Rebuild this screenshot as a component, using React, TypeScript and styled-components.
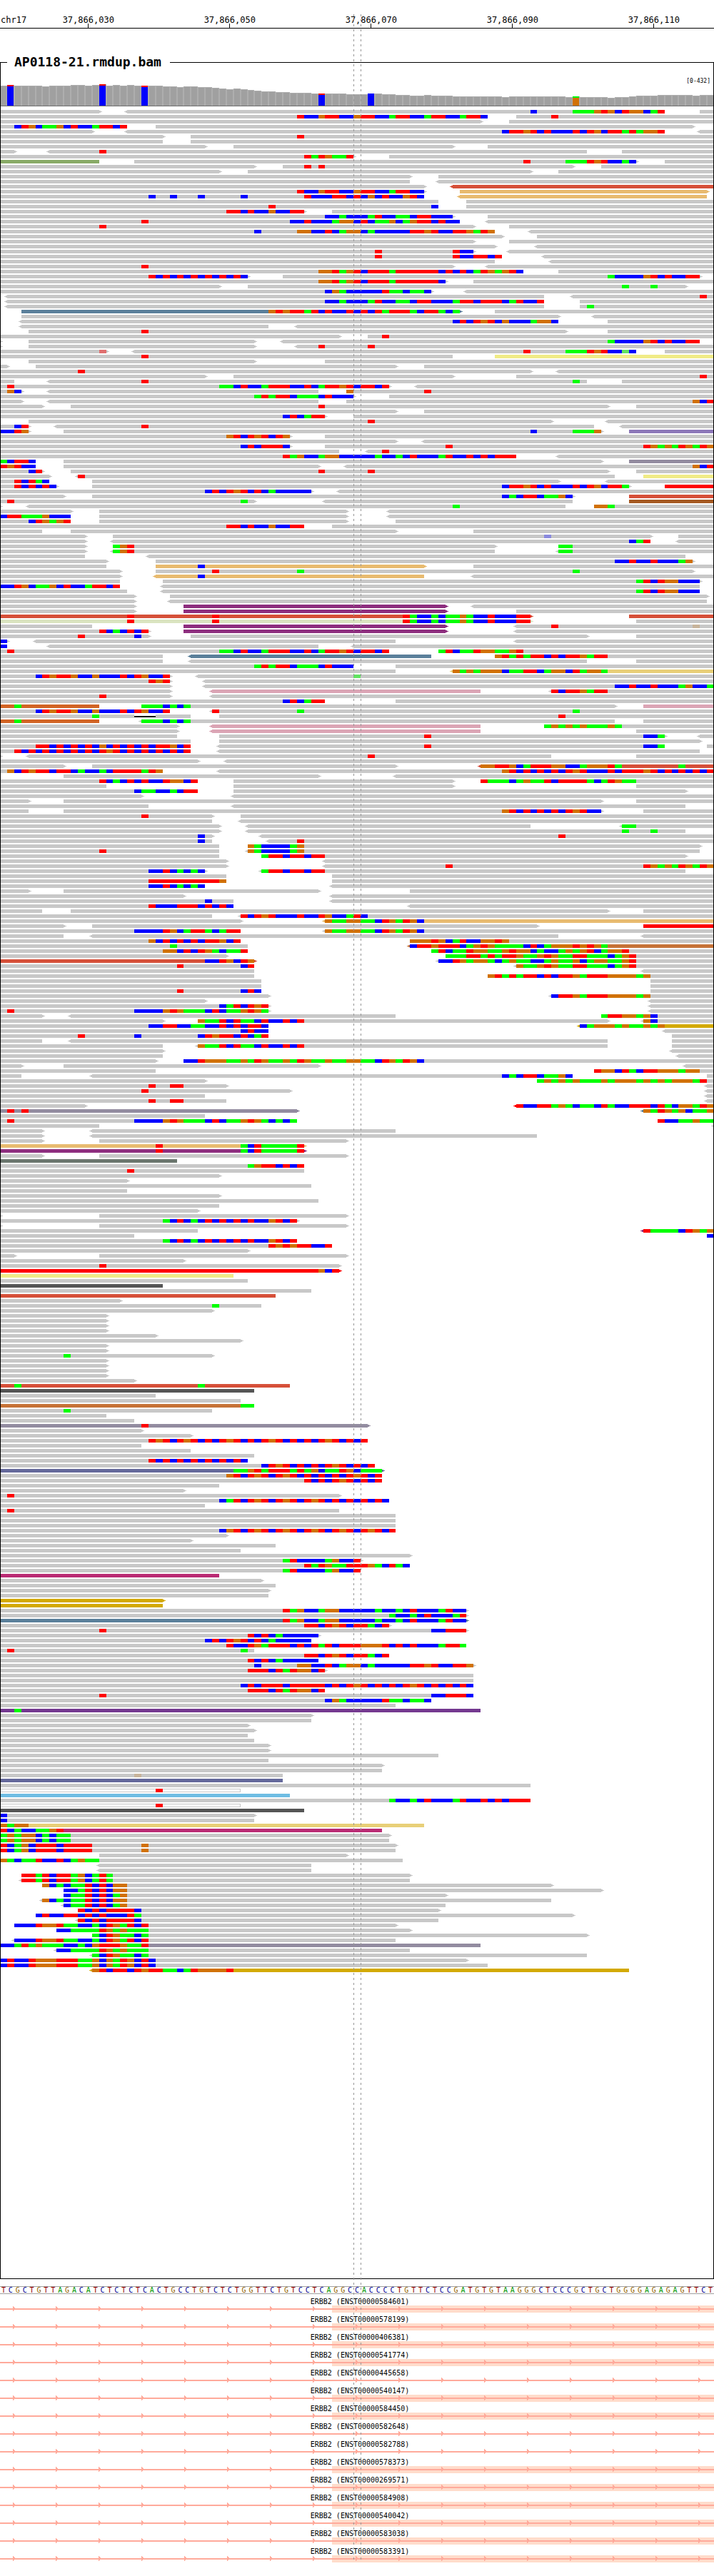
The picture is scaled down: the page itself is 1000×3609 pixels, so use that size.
import React from "react";
import styled, { createGlobalStyle } from "styled-components";

const BASES = 101;
const WIDTH = 1000;
const ROW_PITCH = 7;
const READ_HEIGHT = 5;
const COVERAGE_HEIGHT = 30;

/* x position of the left edge of a base */
const edge = (base: number) => Math.round((base * WIDTH) / BASES);

const baseColor: Record<string, string> = {
  A: "#00ff00",
  C: "#0000ff",
  G: "#d17105",
  T: "#ff0000",
  a: "#62e362",
  c: "#8a8ade",
  g: "#c8b49b",
  t: "#e07070",
};

const letterColor: Record<string, string> = {
  A: "#009600",
  C: "#000096",
  G: "#966400",
  T: "#960000",
};

const readColor: Record<string, string> = {
  g: "#89ab67",
  r: "#d65039",
  o: "#e8bb70",
  b: "#5b809b",
  y: "#f0eb87",
  p: "#8d78b9",
  v: "#938ca0",
  R: "#ff0000",
  n: "#a55a23",
  m: "#8e2f7f",
  l: "#dae4c0",
  Y: "#e8cf78",
  k: "#dba5b5",
  c: "#d26425",
  s: "#c67237",
  d: "#d3a900",
  t: "#6b766e",
  K: "#555555",
  i: "#65699b",
  M: "#ba2b74",
  u: "#743990",
  q: "#6fbde3",
};

/*
 * One line per packed row. "a-b" is a read from base a to base b, with "<" or
 * ">" for its strand arrow and ":x" for its colour; "@nACGT" are bases that
 * differ from the reference, starting at n; "~a-b" is a deletion.
 */
const ROWS = `
0-14> <18-94 99-101 @75C @81AAAGTGCTGGCAT
0-69 73-101 @42TCCGTTCCGTTCCATTCCATTCCATTC @78T
0-68> 72-101
0-18 22-98> @2CTGCAAGCTCCATTCT
0-13> <18-94 <99-101 @71CTTGTCTCCCTCTGCTTATAGGT
0-23> 27-101 @42T
0-23 27-101
0-29> 33-64> 69-101
0-2> <7-83 88-101 @14T
0-50> 55-101 @43TATGAAT
0-14:g 19-90> 94-101 @74T @80AAATGTCCAC
0-36> 40-81> 85-101 @43T @45T
0-31> 35-75> 79-101
0-58> 62-101
0-58 <62-101
0-60> <64-101:r
0-60> 65-100>:o @42TCCGTTCCGTTCCATTCC
0-60 <65-100:o @21C @24C @28C @34C @43TCCCTTCTCGCTCCGTC
0-62 66-101
0-62 66-101 @38T @61C
0-43> 47-101 @32TTCTCCGCCTT
0-64> 69-101 @46CCACCCATCCAACTTCCC
0-65 <69-101 @20T @41CCTCCCAGGCTCAAGCAGTTCTCC
0-67> 72-101 @14T
0-70 <75-101 @36C @42GGCCTCAGGCACCCCCTTGTCCTTGATG
0-71> 76-101
0-67> 72-101
0-70> <76-101
0-67> <72-101 @53T @64TCC
0-71 <77-101 @53T @64TCCTTCT
0-70 <78-101
0-64> <69-101 @20T
0-74 79-101 @45GGTAGTCTTTATTTTTTCTCTCATGAGTC
0-35> 40-99> @21TCTCTCTCTCTCTC @86ACCCCGTCTCCTT
0-63> 67-101 @45GGTAGTCTTTATTTTTTC
0-31> 35-97> @88A @92A
0-61> <66-101 @46CGACCCCCTAACAAC
<1-77 <81-101 @99T
<1-77 82-101 @46CCACCCATCCAACTTCCCATTCTTTCATCCT
<1-77 82-101 @83A
3-65>:b 70-101 @38GTGTTATCTCCTCTCTATTTACTTACA
3-79> <84-101
<3-79 86-101 @64CTCTGTCGCCCAGGC
<3-38 <42-101
4-80> 86-101 @20T
0-48> 52-101 @54T
0-0> 4-36> <40-99 @86ACCCCGTCTCCTT
0-0> 4-36> <42-101 @45T @52T
0-15> <19-90 94-101 @14t @74T @80AAATGTCCaC
0-64 70-101:y @20T
4-36> 46-101
0-1> 5-56> 60-101
0-75> <79-101 @11T
0-29> 33-64> 73-101 @99T
0-2 <7-83 88-101 @20T @81A
0-55> <59-101 @1T @31AACTCCATTTCCTCATTGTCTTCT
0-3> <7-45 49-101 @1GC @49G @60T
0-50> 55-101 @36ATATTCAAACTCCC
0-3> <7-45 49-101 @98GCT
0-6> 10-86> 90-101 @45T
0-56> 60-101
0-46> 50-101 @40CTCATT
4-78> <86-101 @52T
0-4> <8-84 <88-101 @2CT @20T
0-4> 9-85> 89-101:p @0CCTG @75C @81AAAG
0-41> 46-101 @32GTCTGTCTG
0-56> <60-101
0-41> 46-101 @34CTCTTTC @63T @91TGAGATGATG
0-48 <52-101 @54T
0-73 <79-101 @40TAGCCAGGCCCCCACCACTCCCATCCTCTCTTT
0-5 9-85> 89-101:v @0ACTTC
0-5 9-45> <49-101 @0TGTCC @98GCT
0-6> 10-86> 90-101 @4CT @45T @52T
0-7> <11-87 91-101:y @11T
0-7 13-79> <86-101 @2TCTAC
0-8> 13-89> 94-101:R @2TCTCTC @71CTTGTCTCCCTCTGCTTA
0-44> <48-101 @29CTCTGTCTCACCCCC
0-9> 13-81> 89-101:r @71CACTTCAAGC
0-36> <46-81 89-101:n @1T @34A
0-0> <4-80 84-101 @64A @84GGA
0-10> 14-49> <55-101
0-10 14-49> <55-101 @0CTTAAAGCCC
0-10 14-49> 56-101 @4CTGAGT
0-43 47-101 @32TTCTCCGCCTT
0-6 10-56> 67-101
0-12> 16-92> 96-101 @77c
0-12> <16-92 <96-101 @89CAT
0-12> 16-70> 79-101 @16AGT @79AA
0-12> <16-70 <79-101 @16AGT @79AA
0-12 <21-97
0-15> 22-98> @87CCTCCTCCCAG
0-15 22-60>:o 67-101 @28C
0-17> 22-98> @30T @42A @81A
0-17> <22-60:o <67-101 @28C
0-17 23-99> @90ATCTGGCCC
0-17 <23-99 @0CCTGCAAGCTCCATTCT
0-18 <23-99 @90ATCTGGCCC
0-19> 24-100>
0-19> <24-100
0-19> 26-63>:m <67-101
0-19> 26-63>:m 73-101
0-75>:r 89-101:r @18T @30T @57TACCACAAGACCTCCCTT
0-75>:l 90-101 @18T @30T @57TACCACAAGACCTCCCTT
0-13 26-63>:m <73-101 @78T @98g
0-21> 26-63>:m <73-101 @14TCACTCT
0-21> 27-83> 90-101 @11T @19C
0-1> <5-56 <73-101 @0C
0-1 <7-45 <50-101 @0C
0-55 62-101 @1T @31AACTCCATTTCCTCATTGTCTTCT @62ATCAATGGAAGT
0-23 <27-61:b 70-101 @70GTATATTCTCTTGATT
0-23 <27-83 90-101
0-50 56-101 @36ATATTCAAACTCCC
0-56 <64-101:Y @64GAGAGGGCAATTCAGGCTAGGA
0-24> <28-101 @5CTGTTGCCGCCCTCTGCCT @50a
0-24> <29-101 @21TGT
0-24> <29-101 @87CCTCCTCCCAGCCA
0-24> <30-68:k <78-101 @78TCTTGATT
0-24> <30-101 @14T
0-46 56-101 @40CTCATT
0-14:c 20-87> 91-101:k @2A @20AAACACA
0-24 <30-101 @5CTGTTGCCGCCCTCTGCCT @30T @42A @81A
0-27 31-101 @13A ~19-22 @79T
0-14:c <20-87 91-101 @2A @20AAACACA
0-25> <30-68:k 77-101 @77AGAGAGAAAGA
0-25> <30-68:k 90-101
0-25 31-94> <99-101 @60T @91CCA
0-27 31-99>
0-27 <31-94 100-101 @5TTCTCTCTCGCTCTCTCTTGCT @60T @91CCA
0-27 <31-99 @2TCTCTCTCTCTCTGTCTCTCTCTCT
0-0> <4-78 90-101 @52T
0-28> <32-101
0-9> 13-56> <68-101:r @68GGTTGCATTTGGCCAGGGTA @96A
0-23 <31-101 @1GCTGTTCTTCACCACTTTTATG @71GTCTCTCTCTGTCCCTCTTTGTCTCTCTCT
9-45> <56-101
0-28 33-64> 68-101 @14TCACTCTCCTGGCT @68TAAACAGAATCTTTTACATGAA
0-15 33-64> 90-101
0-28 33-97> @19CAACCACTT
0-20> <33-101
0-4> 9-85> 90-101
0-21 <33-97
0-4 9-85> 91-101 @71GTCTCTCTCTGTCC
0-30> 34-101 @20T
0-30 <34-101
0-31> <35-75 <88-101 @88AA
0-31> <35-97 @88A @92A
0-30> <37-101 @28C @79T
0-30 <38-101 @28C @42T
0-31 35-99> @35GACCCCAG
0-31 <35-99 @14T @35GACCCCAG
0-31 37-97> @37ATTCTTCTT
0-32> <46-101
0-32> <46-101 @63T @91TGAGATGATG
0-29> <37-97 @21CCTCACAC @37ATTCTTCTT
0-32 47-101
0-32 47-101 @21TTTTTTTTTTG
0-29 <47-101 @21CCTCACAC
0-4> 9-45> 58-101
0-26> <47-101
0-33 <47-101 @29C
0-33 <58-101 @21TCCCTTTCTCTC
0-6 10-86> 91-101
0-30 <34-101 @34TCTGTCCCTCCTGCCATC
0-34> <46-101:o @46GAAGGAACTGATGC
0-9> 13-76> 91-101:R
0-34 <46-101 @19CCCCTGCATTACATT @46GAAGGAACTGATGC
0-9 <13-79 <91-101
0-34 58-101 @21GCTCTCTCTTGCT @58GGGTGCATCCGGTG
0-35 <58-101:s @24A @58CTTGTTTCAGTGAAAACTCAGGGTGTGA
0-35 61-101 @23GGCTCTGACAAT @61ATCAATGGAAGTGGCACCAGAGTCAGGT
0-32> 63-101 @63AAATTATATTGAAGTGAATTAAACAGT
0-36>:r <62-101 @29CCTGCTG @62CCTGAGGACAGAACCAGAAGCAGGAAGT
0-36 <73-101 @25T @34CT @73GAAGTGAATTAAACAGT
0-36 <91-101
0-36 69-101 @69GTATATTCTCTTGATTTGGGGAG
0-37 92-101
0-37 92-101
0-37 92-101 @25T @34CTC
0-38> <78-101 @78CTTGATTTGGGGAG
0-29> <92-101
0-38> <92-101 @31CATCTGT
0-38> <92-101 @1T @19CCCCGTGAAACTCAAGTGA
0-6> <10-56 85-101 @85ATTGGAGC
0-23> 28-86> <91-101 @28GAATCTAACTCCTCT @91GC
0-38 <82-101:d @21CCTTCCAACCTCTCTTC @82CAGGGAGAAGAG
0-38 <94-101 @34CTCC
0-38 95-101 @11T @19C @28CTGTTCTCAT
0-6 <10-86 95-101
0-23 <28-86 95-101 @28GAATCTAACTCCTCT
0-23> <95-101
0-23 <96-101
0-22> 26-101 @26CCTGGGAAGATGAAGATGAAGAAGGAACTGATGC
0-3> 9-45> <97-101
0-22 84-101 @84TGGCTACTTGGGAGG
0-3 <13-81 100-101 @71CACTTCAAGC
0-29> 76-101 @76AGAGAGAAAGAGGGAGAGAGGGAT
0-32> <100-101 @21T @24TT
0-41> <100-101 @20T
0-29 <100-101
0-32 <100-101 @21T @24TT
0-12> <73-101:R @73TCCTTAGACAACTACCTTTCTACGGATG
0-42>:v <91-101:b @1T @3T @91GATGAGCAAG
0-29
0-42 93-101 @1T @19CCCCGTGAAACTCAAGTGACACA @93TCCAAGAA
0-14 <101-101
0-6> <13-56
0-6> <13-76
0-6> 14-49>
0-43>:o @22T @34ACTAAAAAT
0-43>:m @22T @34ACTAAAAAT
0-6> 14-49>
0-25:t
0-43 @35AGTTCTCT
0-43 @18T
0-31>
0-18>
0-44
0-18
0-31>
0-45
0-31
0-28>
0-0> 14-49>
0-42> @23ACTCACTCTCTCTCCGTCT
0-0> 14-49>
0-28 <91-101:m @91TAAAACTGAG
0-19 100-101 @100C
0-42 @23ACTCACTCTCTCTCCGTCT
0-47 @38TGTGTTCCT
0-35>
0-2> 14-49>
0-26>
0-48> @14T
0-48>:R @45GC
0-33:y
0-35
0-23:K
0-44
0-39:r
0-17>
0-37 @30A
0-30>
0-15>
0-15>
0-15>
0-15>
0-22>
0-34>
0-15>
0-15>
0-30> @9A
0-15>
0-15>
0-15>
0-15>
0-19>
0-41:r @2A @28A
0-36:K
0-22
0-34
0-36:s @34AA
0-30 @9A
0-15
0-19
0-52>:v @20T
0-20>
0-27>
0-52 @21TGTCTGTCTCTGTCTCTGTCTCTCTGTCTCT
0-20
0-27
0-36
0-35 @21TCTCTCTCTCTCTC
0-53 @37CTGTCTCTCTGTCTCT
0-54>:i @33AAGTATTTATAGCAATGCAAA
0-54 @32GTCTGTCTGTCTCTCTCTGTCT
0-54 @43TCTCTGTCTCT
0-31
0-26>
0-48> @1T
0-55 @31CATCTGTCTGTCTGTCTCTCTCTC
0-29
0-48 @1T
0-56
0-56
0-56
0-56 @31CGTCTGTCTGTCTGTCTGTCTGTCT
0-32>
0-27>
0-39
0-34
0-58>
0-51> @40ATCCCCAGCCT
0-58 @43TATGAATTTGACTAC
0-51 @40ATCCCCAGCCT
0-31:M
0-37>
0-39
0-38>
0-38
0-23>:d
0-23:d
0-66> @40TAGCCAGGCCCCCACCACTCCCATCC
0-66> @55ACCACTCCCAT
0-66>:b @40TAGCCAGGCCCCCACCACTCCCATCC
0-55> @43TTCTGTCTTACT
0-66> @14T @61CCTTT
0-45> @35TCTCACCCCC
0-44 @29CTCTGTCTCACCCCC
0-66 @32TCCTGATTTCTCTATCTTTGGGTCTCTCCCATTA
0-36 @1T @34A
0-55 @43TTCTGTCTTACT
0-45 @35TCTCACCCCC
0-67> @36C @42GGCCTCAGGCACCCCCTTGTCCTTG
0-46> @35TTTCTATGGCT
0-67
0-67
0-67 @34CTCTTTCTTTTTCTCTGTCTCTCTGTCTCTCTC
0-46 @35TTTCTATGGCT
0-67 @14T @61CCTTTC
0-61 @46CGACCCCCTAACAAC
0-56
0-68:u @2A
0-44>
0-44
0-35>
0-36>
0-35
0-36
0-38>
0-38>
0-62
0-38
0-54>
0-54
0-40 @19g
0-40:i
0-75
0-34:h @22T
0-41:q
0-75 @55ACCACTCCCATCCTCTCTTT
0-34:h @22T
0-43:K
0-36> @0C
0-36 @0C
0-60:Y @0GAGG
0-54:M @0TCACCAAGT
0-55> @0AGAGGCACAA
0-55 @0AGAGGCACAA
0-56> @0TCAGCTTTCTTTT @20G
0-56 @0TCAGCTTTCTTTT @20G
14-49>
0-57 @0GACAATCCTCAGAA
<14-44
<14-44
3-58> @3TTATCTTAGCATA
<3-58 @3TTATCTTAGCATA
6-78> @6GCACAATCTCGG
9-85> @9CCATCTCGG
9-63> @9CAATCTCAG
<6-78 @6GCACAATCTCGG
<9-63 @9CAATCTCAG
11-62> @11TCTCTTTTC
5-81> @5CTCCTTCTCTCCCTA
<11-62 @11TCTCTTTTC
2-56> @2CCCTGGTAACCACTGATCT
8-58> @8CCAAAATGAGAAA
13-83> @13ACTGAACA
<2-56 @2CCCTGGTAACCACTGATCT
0-68:v @0CCATAGAAACCACGTTTGAAT
<8-58 @8CCAAAATGAGAAA
<13-83 @13ACTGAACA
0-66> @0CTCCTGGGTTTAAGCGATGCTC
0-69 @0CTCCTGGGTTTAAGCGATGCTC
<13-89:d @13GTCTTCTGTTAACATGGGGT
`
  .trim()
  .split("\n");

/* [height, number of neighbouring bases with it] */
const COVERAGE_RUNS: [number, number][] = [
  [28, 1], [29, 1], [28, 4], [27, 1], [28, 3], [29, 2], [28, 1], [29, 1],
  [30, 1], [28, 1], [29, 1], [28, 1], [29, 1], [28, 4], [27, 2], [26, 1],
  [27, 2], [26, 2], [25, 1], [24, 1], [23, 1], [24, 1], [23, 1], [22, 1],
  [21, 1], [20, 2], [19, 2], [18, 3], [17, 5], [16, 3], [17, 2], [16, 2],
  [15, 2], [14, 2], [15, 1], [14, 3], [13, 7], [12, 1], [13, 8], [12, 1],
  [13, 1], [12, 4], [11, 1], [12, 2], [13, 1], [14, 3], [15, 5], [14, 1],
  [15, 2],
];
const COVERAGE = COVERAGE_RUNS.flatMap(([height, count]) =>
  Array<number>(count).fill(height)
);

/* bases with variant alleles: [base, lower colour, upper colour, upper height] */
const VARIANTS: [number, string, string, number][] = [
  [1, "#0000ff", "#ff0000", 2],
  [14, "#0000ff", "#ff0000", 2],
  [20, "#0000ff", "#ff0000", 2],
  [45, "#0000ff", "#ff0000", 2],
  [52, "#0000ff", "#0000ff", 0],
  [81, "#d17105", "#00ff00", 2],
];

const SEQUENCE =
  "TCGCTGTTAGACATCTCTCTCACTGCCTGTCTCTGGTTCTGTCCTCAGGCCACCCCTGTTCTCCGATGTGTAAGGGCTCCCGCTGCTGGGGAGAGAGTTCT";

const POSITIONS = ["37,866,030", "37,866,050", "37,866,070", "37,866,090", "37,866,110"];

const TRANSCRIPTS: { id: string; exon: boolean }[] = [
  { id: "ENST00000584601", exon: true },
  { id: "ENST00000578199", exon: true },
  { id: "ENST00000406381", exon: true },
  { id: "ENST00000541774", exon: true },
  { id: "ENST00000445658", exon: false },
  { id: "ENST00000540147", exon: true },
  { id: "ENST00000584450", exon: true },
  { id: "ENST00000582648", exon: false },
  { id: "ENST00000582788", exon: false },
  { id: "ENST00000578373", exon: true },
  { id: "ENST00000269571", exon: true },
  { id: "ENST00000584908", exon: true },
  { id: "ENST00000540042", exon: true },
  { id: "ENST00000583038", exon: true },
  { id: "ENST00000583391", exon: true },
];

const GlobalStyle = createGlobalStyle`
  body {
    margin: 0;
    background: #ffffff;
    color: #000000;
    font-family: "DejaVu Sans Mono", monospace;
  }
`;

const Browser = styled.main`
  position: relative;
  overflow: hidden;
  padding-bottom: 19px;
`;

const Guide = styled.div<{ $base: number }>`
  position: absolute;
  top: 20px;
  bottom: 20px;
  left: calc(100% * ${(p) => p.$base} / ${BASES});
  width: 1px;
  background: repeating-linear-gradient(to bottom, #969696 0 3px, transparent 3px 7px);
`;

const Ruler = styled.header`
  border-bottom: 1px solid #000000;
  padding-top: 23px;
  font-size: 12px;
  line-height: 10px;
  white-space: nowrap;
  overflow: hidden;
`;

/* 2.5 bases before the first interval, then five intervals of 20 bases */
const Scale = styled.div`
  display: grid;
  grid-template-columns: 25fr repeat(5, 200fr);
  width: calc(100% * 1025 / 1010);
`;

const Chromosome = styled.div`
  width: 0;
  padding-left: 1px;
`;

const Position = styled.div`
  display: flex;
  flex-direction: column;
  align-items: center;

  &::after {
    content: "";
    width: 1px;
    height: 6px;
    background: #000000;
  }
`;

const Track = styled.fieldset`
  min-width: 0;
  margin: 36px 0 0;
  border: 1px solid #000000;
  padding: 0 0 427px;
`;

const TrackName = styled.legend`
  margin-left: 9px;
  padding: 0 12px 0 10px;
  font-size: 18px;
  font-weight: bold;
  line-height: 22px;
`;

const Range = styled.div`
  padding: 11px 4px 0 0;
  font-size: 8px;
  line-height: 9px;
  text-align: right;
`;

const Plot = styled.svg<{ $height: number }>`
  display: block;
  width: 100%;
  height: ${(p) => p.$height}px;
  shape-rendering: crispEdges;
`;

const Alignments = styled.div`
  padding-top: 5px;
`;

const Sequence = styled.div`
  display: grid;
  grid-template-columns: repeat(${BASES}, 1fr);
  margin-top: 10px;
  border-top: 1px solid #a0a0a0;
  border-bottom: 1px solid #a0a0a0;
  font-size: 10px;
  line-height: 9px;
  text-align: center;
`;

const Letter = styled.span<{ $base: string }>`
  min-width: 0;
  color: ${(p) => letterColor[p.$base]};
`;

const Genes = styled.ul`
  list-style: none;
  margin: 1px 0 0;
  padding: 0;
`;

const Gene = styled.li`
  padding-top: 5px;
`;

const GeneName = styled.div`
  padding-left: 8px;
  font-size: 10px;
  line-height: 10px;
  text-align: center;
  white-space: nowrap;
`;

function Coverage() {
  return (
    <Plot
      $height={COVERAGE_HEIGHT + 1}
      viewBox={`1 0 ${WIDTH - 2} ${COVERAGE_HEIGHT + 1}`}
      preserveAspectRatio="none"
    >
      {COVERAGE.map((height, i) => {
        const x = edge(i);
        const width = edge(i + 1) - x;
        return (
          <g key={i}>
            <rect x={x} y={COVERAGE_HEIGHT - height} width={width} height={height} fill="#aeaeae" />
            <rect x={x + 1} y={COVERAGE_HEIGHT - height + 1} width={width - 2} height={height - 1} fill="#a0a0a0" />
          </g>
        );
      })}
      {VARIANTS.map(([base, lower, upper, upperHeight]) => {
        const y = COVERAGE_HEIGHT - COVERAGE[base];
        return (
          <g key={base}>
            <rect x={edge(base)} y={y} width={9} height={COVERAGE[base]} fill={lower} />
            <rect x={edge(base)} y={y} width={9} height={upperHeight} fill={upper} />
          </g>
        );
      })}
      <rect x={0} y={COVERAGE_HEIGHT} width={WIDTH} height={1} fill="#707070" />
    </Plot>
  );
}

function Read({ token, y }: { token: string; y: number }) {
  const parts = /^(<?)(\d+)-(\d+)(>?):?(\w?)$/.exec(token);
  if (!parts) return null;
  const x0 = edge(Number(parts[2]));
  const x1 = edge(Number(parts[3]));
  if (parts[5] === "h") {
    return (
      <g fill="#c8c8c8">
        <rect x={x0} y={y} width={x1 - x0} height={READ_HEIGHT} />
        <rect x={x0} y={y + 1} width={x1 - x0 - 1} height={READ_HEIGHT - 2} fill="#ffffff" />
      </g>
    );
  }
  return (
    <g fill={readColor[parts[5]] ?? "#c8c8c8"}>
      <rect x={x0} y={y} width={x1 - x0} height={READ_HEIGHT} />
      {parts[1] && <path d={`M${x0} ${y + 1}h-2v1h-2v1h2v1h2z`} />}
      {parts[4] && <path d={`M${x1} ${y + 1}h2v1h2v1h-2v1h-2z`} />}
    </g>
  );
}

function Mismatches({ token, y }: { token: string; y: number }) {
  const parts = /^@(\d+)(\w+)$/.exec(token);
  if (!parts) return null;
  let base = Number(parts[1]);
  return (
    <>
      {(parts[2].match(/(.)\1*/g) ?? []).map((run) => {
        const x = edge(base);
        base += run.length;
        return (
          <rect key={x} x={x} y={y} width={edge(base) - x} height={READ_HEIGHT} fill={baseColor[run[0]]} />
        );
      })}
    </>
  );
}

function Deletion({ token, y }: { token: string; y: number }) {
  const [from, to] = token.slice(1).split("-").map((n) => edge(Number(n)));
  return (
    <>
      <rect x={from} y={y} width={to - from} height={READ_HEIGHT} fill="#ffffff" />
      <rect x={from} y={y + 2} width={to - from} height={2} fill="#000000" />
    </>
  );
}

function Reads() {
  const height = ROWS.length * ROW_PITCH;
  return (
    <Plot $height={height} viewBox={`1 0 ${WIDTH - 2} ${height}`} preserveAspectRatio="none">
      {ROWS.map((row, i) => (
        <g key={i}>
          {row.split(" ").map((token) => {
            const Mark = token[0] === "@" ? Mismatches : token[0] === "~" ? Deletion : Read;
            return <Mark key={token} token={token} y={i * ROW_PITCH} />;
          })}
        </g>
      ))}
    </Plot>
  );
}

function Transcript({ exon }: { exon: boolean }) {
  const arrows = Array.from({ length: 17 }, (_, i) => 18 + i * 60);
  return (
    <Plot $height={10} viewBox={`0 0 ${WIDTH} 10`} preserveAspectRatio="none">
      {exon && <rect x={edge(47)} y={0} width={WIDTH - edge(47)} height={10} fill="#ffdccb" />}
      <g fill="#ffaa9b">
        <rect x={0} y={4} width={WIDTH} height={2} />
        {arrows.map((x) => (
          <path key={x} d={`M${x} 1l3 3v1l-3 3z`} />
        ))}
      </g>
    </Plot>
  );
}

export default function App() {
  return (
    <>
      <GlobalStyle />
      <Browser>
        <Ruler>
          <Scale>
            <Chromosome>chr17</Chromosome>
            {POSITIONS.map((position) => (
              <Position key={position}>{position}</Position>
            ))}
          </Scale>
        </Ruler>
        <Track>
          <TrackName>AP0118-21.rmdup.bam</TrackName>
          <Range>[0-432]</Range>
          <Coverage />
          <Alignments>
            <Reads />
          </Alignments>
        </Track>
        <Sequence>
          {[...SEQUENCE].map((base, i) => (
            <Letter key={i} $base={base}>
              {base}
            </Letter>
          ))}
        </Sequence>
        <Genes>
          {TRANSCRIPTS.map(({ id, exon }) => (
            <Gene key={id}>
              <GeneName>ERBB2 ({id})</GeneName>
              <Transcript exon={exon} />
            </Gene>
          ))}
        </Genes>
        <Guide $base={50} />
        <Guide $base={51} />
      </Browser>
    </>
  );
}
